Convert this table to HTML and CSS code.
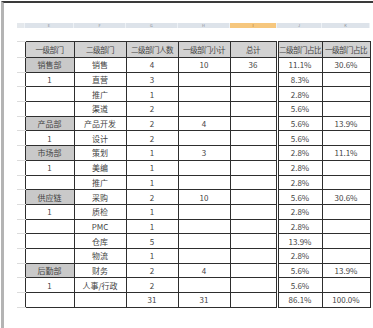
FILE: index.html
```html
<!DOCTYPE html>
<html>
<head>
<meta charset="utf-8">
<link rel="stylesheet" href="styles.css">
</head>
<body>
<div class="window">
  <div class="colbar">
    <span class="corner"></span>
    <span>E</span><span>F</span><span>G</span><span>H</span><span class="sel">I</span><span>J</span><span>K</span>
  </div>
  <table class="sheet">
    <colgroup>
      <col class="c0"><col class="c1"><col class="c2"><col class="c3"><col class="c4"><col class="c5"><col class="c6"><col class="c7">
    </colgroup>
    <tr class="head"><td class="rh"></td><td>一级部门</td><td>二级部门</td><td>二级部门人数</td><td>一级部门小计</td><td>总计</td><td class="dbl">二级部门占比</td><td>一级部门占比</td></tr>
    <tr><td class="rh"></td><td class="dept">销售部</td><td>销售</td><td>4</td><td>10</td><td>36</td><td class="dbl">11.1%</td><td>30.6%</td></tr>
    <tr><td class="rh"></td><td>1</td><td>直营</td><td>3</td><td></td><td></td><td class="dbl">8.3%</td><td></td></tr>
    <tr><td class="rh"></td><td></td><td>推广</td><td>1</td><td></td><td></td><td class="dbl">2.8%</td><td></td></tr>
    <tr><td class="rh"></td><td></td><td>渠道</td><td>2</td><td></td><td></td><td class="dbl">5.6%</td><td></td></tr>
    <tr><td class="rh"></td><td class="dept">产品部</td><td>产品开发</td><td>2</td><td>4</td><td></td><td class="dbl">5.6%</td><td>13.9%</td></tr>
    <tr><td class="rh"></td><td>1</td><td>设计</td><td>2</td><td></td><td></td><td class="dbl">5.6%</td><td></td></tr>
    <tr><td class="rh"></td><td class="dept">市场部</td><td>策划</td><td>1</td><td>3</td><td></td><td class="dbl">2.8%</td><td>11.1%</td></tr>
    <tr><td class="rh"></td><td>1</td><td>美编</td><td>1</td><td></td><td></td><td class="dbl">2.8%</td><td></td></tr>
    <tr><td class="rh"></td><td></td><td>推广</td><td>1</td><td></td><td></td><td class="dbl">2.8%</td><td></td></tr>
    <tr><td class="rh"></td><td class="dept">供应链</td><td>采购</td><td>2</td><td>10</td><td></td><td class="dbl">5.6%</td><td>30.6%</td></tr>
    <tr><td class="rh"></td><td>1</td><td>质检</td><td>1</td><td></td><td></td><td class="dbl">2.8%</td><td></td></tr>
    <tr><td class="rh"></td><td></td><td>PMC</td><td>1</td><td></td><td></td><td class="dbl">2.8%</td><td></td></tr>
    <tr><td class="rh"></td><td></td><td>仓库</td><td>5</td><td></td><td></td><td class="dbl">13.9%</td><td></td></tr>
    <tr><td class="rh"></td><td></td><td>物流</td><td>1</td><td></td><td></td><td class="dbl">2.8%</td><td></td></tr>
    <tr><td class="rh"></td><td class="dept">后勤部</td><td>财务</td><td>2</td><td>4</td><td></td><td class="dbl">5.6%</td><td>13.9%</td></tr>
    <tr><td class="rh"></td><td>1</td><td>人事/行政</td><td>2</td><td></td><td></td><td class="dbl">5.6%</td><td></td></tr>
    <tr><td class="rh"></td><td></td><td></td><td>31</td><td>31</td><td></td><td class="dbl">86.1%</td><td>100.0%</td></tr>
  </table>
</div>
</body>
</html>
```

FILE: styles.css
```css
html, body {
  margin: 0;
  padding: 0;
  background: #ffffff;
}
body {
  width: 373px;
  height: 328px;
  overflow: hidden;
  font-family: "Noto Sans CJK SC", "Noto Sans", sans-serif;
}
.window {
  margin: 1px 0 0 1px;
  height: 327px;
  box-sizing: border-box;
  border-top: 2px solid #3a3a3a;
  border-left: 3px solid #b4b4b4;
  padding: 20px 0 0 13px;
}
.colbar {
  display: grid;
  grid-template-columns: 8px 49px 52px 52px 52px 47px 45px 48px;
  height: 5px;
  width: 353px;
  background: #dde3ea;
}
.colbar span {
  font-size: 4px;
  line-height: 5px;
  color: #8a8f96;
  text-align: center;
  border-right: 1px solid #eef2f6;
}
.colbar .corner {
  background: #e4e8ec;
}
.colbar .sel {
  background: #f6c77e;
  color: #a07030;
}
.sheet {
  margin-top: 13px;
  border-collapse: collapse;
  table-layout: fixed;
  width: 353px;
}
.c0 { width: 8px; }
.c1 { width: 49px; }
.c2 { width: 52px; }
.c3 { width: 52px; }
.c4 { width: 52px; }
.c5 { width: 47px; }
.c6 { width: 45px; }
.c7 { width: 48px; }
.sheet tr {
  height: 14.7px;
}
.sheet td {
  padding: 0;
  border: 1px solid #2e2e2e;
  font-size: 8px;
  line-height: 9px;
  color: #444444;
  text-align: center;
  vertical-align: middle;
  white-space: nowrap;
  overflow: hidden;
}
.sheet td.rh {
  border: none;
  border-bottom: 1px solid #dcdcdc;
}
.sheet tr.head td.rh {
  border-top: 1px solid #dcdcdc;
}
.sheet tr.head td {
  background: #d2d2d2;
  height: 15px;
  font-size: 7.5px;
  letter-spacing: -0.5px;
}
.sheet tr.head td.rh {
  background: transparent;
}
.sheet td.dept {
  background: #c9c9c9;
}
.sheet td.dbl {
  border-left: 3px double #2e2e2e;
}
```
